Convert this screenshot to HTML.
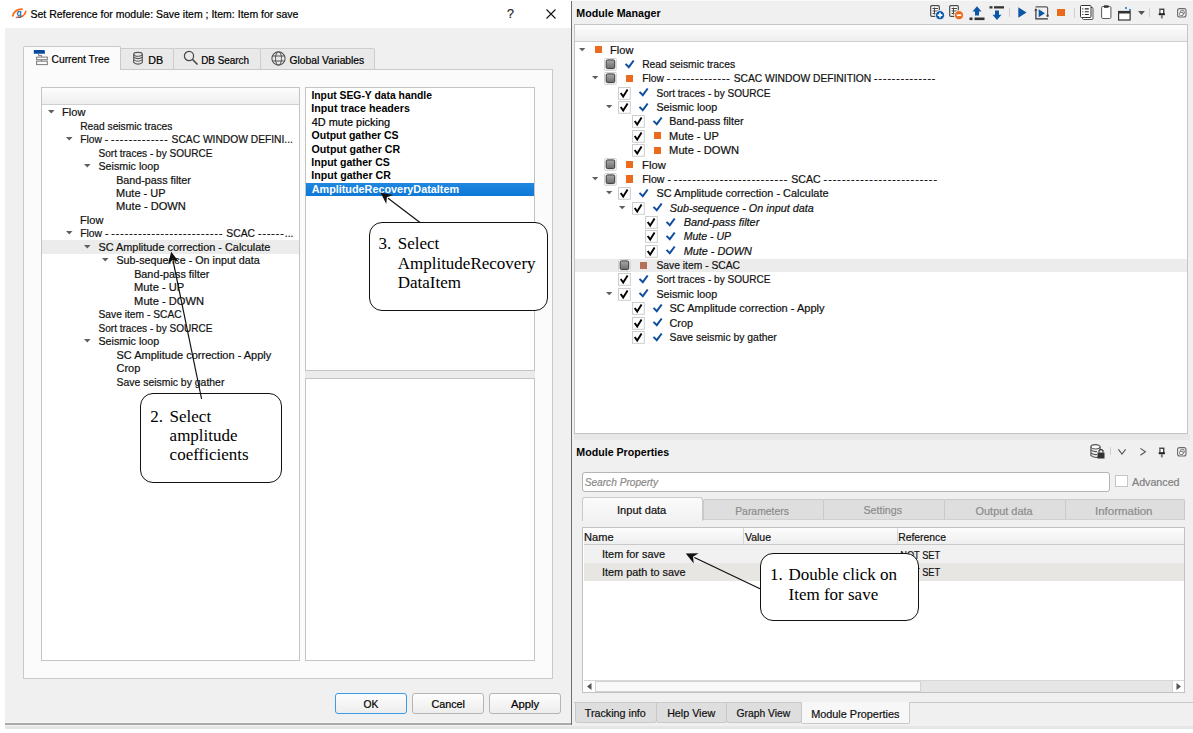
<!DOCTYPE html><html><head><meta charset="utf-8"><style>html,body{margin:0;padding:0;}body{width:1193px;height:733px;position:relative;overflow:hidden;background:#f0f0f0;font-family:"Liberation Sans",sans-serif;}</style></head><body>
<div style="position:absolute;left:571px;top:0px;width:622px;height:733px;background:#f0f0f0"></div>
<div style="position:absolute;left:571px;top:0px;width:622px;height:1px;background:#fafafa"></div>
<div style="position:absolute;left:0px;top:0px;width:571px;height:28px;background:#ffffff"></div>
<div style="position:absolute;left:0px;top:28px;width:5px;height:705px;background:#ffffff"></div>
<div style="position:absolute;left:5px;top:28px;width:566px;height:694px;background:#f0f0f0"></div>
<div style="position:absolute;left:5px;top:722px;width:567px;height:1px;background:#f7f7f7"></div>
<div style="position:absolute;left:5px;top:723px;width:567px;height:2px;background:#a9a9a9"></div>
<div style="position:absolute;left:5px;top:725px;width:567px;height:1px;background:#f4f4f4"></div>
<div style="position:absolute;left:5px;top:726px;width:1188px;height:3px;background:#e6e6e6"></div>
<div style="position:absolute;left:0px;top:729px;width:1193px;height:4px;background:#ffffff"></div>
<div style="position:absolute;left:571px;top:1px;width:1px;height:724px;background:#6e6e6e"></div>
<svg style="position:absolute;left:8px;top:4px;overflow:visible;" width="24" height="20" viewBox="0 0 24 20"><path d="M4.8 11.9 Q6.2 5.6 14 5.2" stroke="#ff6a13" stroke-width="1.7" fill="none" stroke-linecap="round"/><path d="M17.8 7.3 Q16.6 13.3 8.6 13.5" stroke="#ff6a13" stroke-width="1.7" fill="none" stroke-linecap="round"/><text x="11.2" y="11.6" font-family="Liberation Sans" font-size="8.5" font-weight="bold" fill="#1a6cb5" text-anchor="middle">g</text></svg>
<div style="position:absolute;left:31.00px;top:6.36px;line-height:16px;font-family:'Liberation Sans', sans-serif;font-size:10.5px;font-weight:normal;color:#000;white-space:nowrap;-webkit-text-stroke-width:0.2px;;transform:translateX(-0.53px) scaleX(1.0003);transform-origin:0 0">Set Reference for module: Save item ; Item: Item for save</div>
<div style="position:absolute;left:507.00px;top:5.67px;line-height:16px;font-family:'Liberation Sans', sans-serif;font-size:12.5px;font-weight:normal;color:#222;white-space:nowrap;-webkit-text-stroke-width:0.2px;">?</div>
<svg style="position:absolute;left:545.5px;top:8.5px;overflow:visible;" width="10" height="10" viewBox="0 0 10 10"><path d="M0.5 0.5 L9.5 9.5 M9.5 0.5 L0.5 9.5" stroke="#111" stroke-width="1.1"/></svg>
<div style="position:absolute;left:23px;top:69px;width:530px;height:610px;background:#fbfbfb;border:1px solid #c9c9c9;box-sizing:border-box"></div>
<div style="position:absolute;left:120px;top:48px;width:54px;height:21px;background:#e9e9e9;border:1px solid #cdcdcd;border-bottom:none;border-radius:2px 2px 0 0;box-sizing:border-box"></div>
<div style="position:absolute;left:173px;top:48px;width:88px;height:21px;background:#e9e9e9;border:1px solid #cdcdcd;border-bottom:none;border-radius:2px 2px 0 0;box-sizing:border-box"></div>
<div style="position:absolute;left:260px;top:48px;width:115px;height:21px;background:#e9e9e9;border:1px solid #cdcdcd;border-bottom:none;border-radius:2px 2px 0 0;box-sizing:border-box"></div>
<div style="position:absolute;left:23px;top:46px;width:98px;height:24px;background:#fbfbfb;border:1px solid #c9c9c9;border-bottom:none;border-radius:2px 2px 0 0;box-sizing:border-box"></div>
<div style="position:absolute;left:52.00px;top:51.36px;line-height:16px;font-family:'Liberation Sans', sans-serif;font-size:10.5px;font-weight:normal;color:#000;white-space:nowrap;-webkit-text-stroke-width:0.2px;;transform:translateX(-0.52px) scaleX(0.9834);transform-origin:0 0">Current Tree</div>
<div style="position:absolute;left:149.00px;top:51.86px;line-height:16px;font-family:'Liberation Sans', sans-serif;font-size:10.5px;font-weight:normal;color:#000;white-space:nowrap;-webkit-text-stroke-width:0.2px;;transform:translateX(-0.86px) scaleX(1.0204);transform-origin:0 0">DB</div>
<div style="position:absolute;left:202.40px;top:51.86px;line-height:16px;font-family:'Liberation Sans', sans-serif;font-size:10.5px;font-weight:normal;color:#000;white-space:nowrap;-webkit-text-stroke-width:0.2px;;transform:translateX(-0.79px) scaleX(0.9422);transform-origin:0 0">DB Search</div>
<div style="position:absolute;left:289.60px;top:51.86px;line-height:16px;font-family:'Liberation Sans', sans-serif;font-size:10.5px;font-weight:normal;color:#000;white-space:nowrap;-webkit-text-stroke-width:0.2px;;transform:translateX(-0.51px) scaleX(0.9802);transform-origin:0 0">Global Variables</div>
<svg style="position:absolute;left:33px;top:49px;overflow:visible;" width="16" height="17" viewBox="0 0 16 17"><path d="M0.8 1 H10.6 Q11.9 1 11.9 2.3 V4.8 H0.8 Z" fill="#0a4a9e"/><path d="M5.5 4.8 V6.4 H8.6 V8.1 M8.6 10.6 V12.2" stroke="#7a7a7a" stroke-width="1" fill="none"/><rect x="3.6" y="8.1" width="10.7" height="2.6" fill="none" stroke="#7a7a7a" stroke-width="1"/><rect x="3.6" y="12.2" width="10.7" height="3.4" fill="none" stroke="#7a7a7a" stroke-width="1"/></svg>
<svg style="position:absolute;left:133px;top:52px;overflow:visible;" width="12" height="14" viewBox="0 0 12 14"><ellipse cx="5" cy="2.3" rx="4.3" ry="1.9" fill="none" stroke="#555" stroke-width="1.1"/><path d="M0.7 2.3 V10.6 Q5 13.6 9.3 10.6 V2.3" fill="none" stroke="#555" stroke-width="1.1"/><path d="M0.7 5.2 Q5 8 9.3 5.2 M0.7 7.9 Q5 10.7 9.3 7.9" fill="none" stroke="#555" stroke-width="1.1"/></svg>
<svg style="position:absolute;left:183px;top:50px;overflow:visible;" width="16" height="16" viewBox="0 0 16 16"><circle cx="6" cy="6" r="4.6" fill="none" stroke="#444" stroke-width="1.2"/><path d="M9.3 9.3 L14.5 14.5" stroke="#444" stroke-width="1.6"/></svg>
<svg style="position:absolute;left:270.5px;top:50.5px;overflow:visible;" width="15" height="15" viewBox="0 0 15 15"><circle cx="7.5" cy="7.5" r="6.6" fill="none" stroke="#555" stroke-width="1.1"/><ellipse cx="7.5" cy="7.5" rx="3" ry="6.6" fill="none" stroke="#555" stroke-width="1"/><path d="M1 5 H14 M1 10 H14" stroke="#555" stroke-width="1"/></svg>
<div style="position:absolute;left:41px;top:87px;width:259px;height:574px;background:#fff;border:1px solid #c4c4c4;box-sizing:border-box"></div>
<div style="position:absolute;left:42px;top:88px;width:257px;height:16px;background:linear-gradient(#fdfdfd,#eeeeee)"></div>
<div style="position:absolute;left:42px;top:104px;width:257px;height:1px;background:#cfcfcf"></div>
<div style="position:absolute;left:42px;top:240px;width:257px;height:13.5px;background:#ececec"></div>
<svg style="position:absolute;left:47.60000000000001px;top:110.0px;overflow:visible;" width="6.6" height="3.4" viewBox="0 0 6.6 3.4"><path d="M0 0 L6.6 0 L3.3 3.4 Z" fill="#5f5f5f"/></svg>
<div style="position:absolute;left:62.60px;top:104.16px;line-height:16px;font-family:'Liberation Sans', sans-serif;font-size:10.5px;font-weight:normal;color:#111;white-space:nowrap;-webkit-text-stroke-width:0.2px;;transform:translateX(-0.88px) scaleX(1.0504);transform-origin:0 0">Flow</div>
<div style="position:absolute;left:80.60px;top:117.63px;line-height:16px;font-family:'Liberation Sans', sans-serif;font-size:10.5px;font-weight:normal;color:#111;white-space:nowrap;-webkit-text-stroke-width:0.2px;;transform:translateX(-0.82px) scaleX(0.9759);transform-origin:0 0">Read seismic traces</div>
<svg style="position:absolute;left:65.6px;top:136.94px;overflow:visible;" width="6.6" height="3.4" viewBox="0 0 6.6 3.4"><path d="M0 0 L6.6 0 L3.3 3.4 Z" fill="#5f5f5f"/></svg>
<div style="position:absolute;left:80.60px;top:131.10px;line-height:16px;font-family:'Liberation Sans', sans-serif;font-size:10.5px;font-weight:normal;color:#111;white-space:nowrap;-webkit-text-stroke-width:0.2px;;transform:translateX(-0.82px) scaleX(0.9769);transform-origin:0 0">Flow - <span style="letter-spacing:0.1em">-------------</span> SCAC WINDOW DEFINI...</div>
<div style="position:absolute;left:98.60px;top:144.57px;line-height:16px;font-family:'Liberation Sans', sans-serif;font-size:10.5px;font-weight:normal;color:#111;white-space:nowrap;-webkit-text-stroke-width:0.2px;;transform:translateX(-0.50px) scaleX(0.9575);transform-origin:0 0">Sort traces - by SOURCE</div>
<svg style="position:absolute;left:83.6px;top:163.88px;overflow:visible;" width="6.6" height="3.4" viewBox="0 0 6.6 3.4"><path d="M0 0 L6.6 0 L3.3 3.4 Z" fill="#5f5f5f"/></svg>
<div style="position:absolute;left:98.60px;top:158.04px;line-height:16px;font-family:'Liberation Sans', sans-serif;font-size:10.5px;font-weight:normal;color:#111;white-space:nowrap;-webkit-text-stroke-width:0.2px;;transform:translateX(-0.53px) scaleX(1.0189);transform-origin:0 0">Seismic loop</div>
<div style="position:absolute;left:116.60px;top:171.51px;line-height:16px;font-family:'Liberation Sans', sans-serif;font-size:10.5px;font-weight:normal;color:#111;white-space:nowrap;-webkit-text-stroke-width:0.2px;;transform:translateX(-0.86px) scaleX(1.0247);transform-origin:0 0">Band-pass filter</div>
<div style="position:absolute;left:116.60px;top:184.98px;line-height:16px;font-family:'Liberation Sans', sans-serif;font-size:10.5px;font-weight:normal;color:#111;white-space:nowrap;-webkit-text-stroke-width:0.2px;;transform:translateX(-0.88px) scaleX(1.0439);transform-origin:0 0">Mute - UP</div>
<div style="position:absolute;left:116.60px;top:198.45px;line-height:16px;font-family:'Liberation Sans', sans-serif;font-size:10.5px;font-weight:normal;color:#111;white-space:nowrap;-webkit-text-stroke-width:0.2px;;transform:translateX(-0.89px) scaleX(1.0582);transform-origin:0 0">Mute - DOWN</div>
<div style="position:absolute;left:80.60px;top:211.92px;line-height:16px;font-family:'Liberation Sans', sans-serif;font-size:10.5px;font-weight:normal;color:#111;white-space:nowrap;-webkit-text-stroke-width:0.2px;;transform:translateX(-0.88px) scaleX(1.0504);transform-origin:0 0">Flow</div>
<svg style="position:absolute;left:65.6px;top:231.23px;overflow:visible;" width="6.6" height="3.4" viewBox="0 0 6.6 3.4"><path d="M0 0 L6.6 0 L3.3 3.4 Z" fill="#5f5f5f"/></svg>
<div style="position:absolute;left:80.60px;top:225.39px;line-height:16px;font-family:'Liberation Sans', sans-serif;font-size:10.5px;font-weight:normal;color:#111;white-space:nowrap;-webkit-text-stroke-width:0.2px;;transform:translateX(-0.83px) scaleX(0.9864);transform-origin:0 0">Flow - <span style="letter-spacing:0.1em">-------------------------</span> SCAC <span style="letter-spacing:0.1em">------</span>...</div>
<svg style="position:absolute;left:83.6px;top:244.7px;overflow:visible;" width="6.6" height="3.4" viewBox="0 0 6.6 3.4"><path d="M0 0 L6.6 0 L3.3 3.4 Z" fill="#5f5f5f"/></svg>
<div style="position:absolute;left:98.60px;top:238.86px;line-height:16px;font-family:'Liberation Sans', sans-serif;font-size:10.5px;font-weight:normal;color:#111;white-space:nowrap;-webkit-text-stroke-width:0.2px;;transform:translateX(-0.54px) scaleX(1.0374);transform-origin:0 0">SC Amplitude correction - Calculate</div>
<svg style="position:absolute;left:101.6px;top:258.17px;overflow:visible;" width="6.6" height="3.4" viewBox="0 0 6.6 3.4"><path d="M0 0 L6.6 0 L3.3 3.4 Z" fill="#5f5f5f"/></svg>
<div style="position:absolute;left:116.60px;top:252.33px;line-height:16px;font-family:'Liberation Sans', sans-serif;font-size:10.5px;font-weight:normal;color:#111;white-space:nowrap;-webkit-text-stroke-width:0.2px;;transform:translateX(-0.54px) scaleX(1.0226);transform-origin:0 0">Sub-sequence - On input data</div>
<div style="position:absolute;left:134.60px;top:265.80px;line-height:16px;font-family:'Liberation Sans', sans-serif;font-size:10.5px;font-weight:normal;color:#111;white-space:nowrap;-webkit-text-stroke-width:0.2px;;transform:translateX(-0.87px) scaleX(1.0302);transform-origin:0 0">Band-pass filter</div>
<div style="position:absolute;left:134.60px;top:279.27px;line-height:16px;font-family:'Liberation Sans', sans-serif;font-size:10.5px;font-weight:normal;color:#111;white-space:nowrap;-webkit-text-stroke-width:0.2px;;transform:translateX(-0.89px) scaleX(1.0592);transform-origin:0 0">Mute - UP</div>
<div style="position:absolute;left:134.60px;top:292.74px;line-height:16px;font-family:'Liberation Sans', sans-serif;font-size:10.5px;font-weight:normal;color:#111;white-space:nowrap;-webkit-text-stroke-width:0.2px;;transform:translateX(-0.89px) scaleX(1.0613);transform-origin:0 0">Mute - DOWN</div>
<div style="position:absolute;left:98.60px;top:306.21px;line-height:16px;font-family:'Liberation Sans', sans-serif;font-size:10.5px;font-weight:normal;color:#111;white-space:nowrap;-webkit-text-stroke-width:0.2px;;transform:translateX(-0.51px) scaleX(0.9761);transform-origin:0 0">Save item - SCAC</div>
<div style="position:absolute;left:98.60px;top:319.68px;line-height:16px;font-family:'Liberation Sans', sans-serif;font-size:10.5px;font-weight:normal;color:#111;white-space:nowrap;-webkit-text-stroke-width:0.2px;;transform:translateX(-0.50px) scaleX(0.9575);transform-origin:0 0">Sort traces - by SOURCE</div>
<svg style="position:absolute;left:83.6px;top:338.99px;overflow:visible;" width="6.6" height="3.4" viewBox="0 0 6.6 3.4"><path d="M0 0 L6.6 0 L3.3 3.4 Z" fill="#5f5f5f"/></svg>
<div style="position:absolute;left:98.60px;top:333.15px;line-height:16px;font-family:'Liberation Sans', sans-serif;font-size:10.5px;font-weight:normal;color:#111;white-space:nowrap;-webkit-text-stroke-width:0.2px;;transform:translateX(-0.53px) scaleX(1.0189);transform-origin:0 0">Seismic loop</div>
<div style="position:absolute;left:116.60px;top:346.62px;line-height:16px;font-family:'Liberation Sans', sans-serif;font-size:10.5px;font-weight:normal;color:#111;white-space:nowrap;-webkit-text-stroke-width:0.2px;;transform:translateX(-0.55px) scaleX(1.0489);transform-origin:0 0">SC Amplitude correction - Apply</div>
<div style="position:absolute;left:116.60px;top:360.09px;line-height:16px;font-family:'Liberation Sans', sans-serif;font-size:10.5px;font-weight:normal;color:#111;white-space:nowrap;-webkit-text-stroke-width:0.2px;;transform:translateX(-0.55px) scaleX(1.0485);transform-origin:0 0">Crop</div>
<div style="position:absolute;left:116.60px;top:373.56px;line-height:16px;font-family:'Liberation Sans', sans-serif;font-size:10.5px;font-weight:normal;color:#111;white-space:nowrap;-webkit-text-stroke-width:0.2px;;transform:translateX(-0.52px) scaleX(0.9941);transform-origin:0 0">Save seismic by gather</div>
<div style="position:absolute;left:305px;top:87px;width:230px;height:284px;background:#fff;border:1px solid #c4c4c4;box-sizing:border-box"></div>
<div style="position:absolute;left:305px;top:371px;width:230px;height:7px;background:#ebebeb"></div>
<div style="position:absolute;left:305px;top:378px;width:230px;height:283px;background:#fff;border:1px solid #c4c4c4;box-sizing:border-box"></div>
<div style="position:absolute;left:306px;top:182.5px;width:228px;height:13.5px;background:linear-gradient(#1f87df,#0d78d7)"></div>
<div style="position:absolute;left:312.00px;top:86.76px;line-height:16px;font-family:'Liberation Sans', sans-serif;font-size:10.5px;font-weight:bold;color:#000;white-space:nowrap;;transform:translateX(-0.62px) scaleX(0.9853);transform-origin:0 0">Input SEG-Y data handle</div>
<div style="position:absolute;left:312.00px;top:100.21px;line-height:16px;font-family:'Liberation Sans', sans-serif;font-size:10.5px;font-weight:bold;color:#000;white-space:nowrap;;transform:translateX(-0.64px) scaleX(1.0171);transform-origin:0 0">Input trace headers</div>
<div style="position:absolute;left:312.00px;top:113.66px;line-height:16px;font-family:'Liberation Sans', sans-serif;font-size:10.5px;font-weight:normal;color:#000;white-space:nowrap;-webkit-text-stroke-width:0.2px;;transform:translateX(-0.22px) scaleX(1.0397);transform-origin:0 0">4D mute picking</div>
<div style="position:absolute;left:312.00px;top:127.11px;line-height:16px;font-family:'Liberation Sans', sans-serif;font-size:10.5px;font-weight:bold;color:#000;white-space:nowrap;;transform:translateX(-0.42px) scaleX(1.0012);transform-origin:0 0">Output gather CS</div>
<div style="position:absolute;left:312.00px;top:140.56px;line-height:16px;font-family:'Liberation Sans', sans-serif;font-size:10.5px;font-weight:bold;color:#000;white-space:nowrap;;transform:translateX(-0.43px) scaleX(1.0134);transform-origin:0 0">Output gather CR</div>
<div style="position:absolute;left:312.00px;top:154.01px;line-height:16px;font-family:'Liberation Sans', sans-serif;font-size:10.5px;font-weight:bold;color:#000;white-space:nowrap;;transform:translateX(-0.63px) scaleX(1.0029);transform-origin:0 0">Input gather CS</div>
<div style="position:absolute;left:312.00px;top:167.46px;line-height:16px;font-family:'Liberation Sans', sans-serif;font-size:10.5px;font-weight:bold;color:#000;white-space:nowrap;;transform:translateX(-0.64px) scaleX(1.0089);transform-origin:0 0">Input gather CR</div>
<div style="position:absolute;left:312.00px;top:180.91px;line-height:16px;font-family:'Liberation Sans', sans-serif;font-size:10.5px;font-weight:bold;color:#fff;white-space:nowrap;;transform:translateX(-0.32px) scaleX(1.0312);transform-origin:0 0">AmplitudeRecoveryDataItem</div>
<div style="position:absolute;left:335px;top:693px;width:72px;height:21px;background:linear-gradient(#fdfdfd,#ededed);border:1px solid #3d9be6;border-radius:3px;box-sizing:border-box"></div>
<div style="position:absolute;left:363.70px;top:696.26px;line-height:16px;font-family:'Liberation Sans', sans-serif;font-size:10.5px;font-weight:normal;color:#000;white-space:nowrap;-webkit-text-stroke-width:0.2px;;transform:translateX(-0.41px) scaleX(0.9798);transform-origin:0 0">OK</div>
<div style="position:absolute;left:412px;top:693px;width:72px;height:21px;background:linear-gradient(#fdfdfd,#ededed);border:1px solid #b5b5b5;border-radius:3px;box-sizing:border-box"></div>
<div style="position:absolute;left:432.10px;top:696.26px;line-height:16px;font-family:'Liberation Sans', sans-serif;font-size:10.5px;font-weight:normal;color:#000;white-space:nowrap;-webkit-text-stroke-width:0.2px;;transform:translateX(-0.54px) scaleX(1.0222);transform-origin:0 0">Cancel</div>
<div style="position:absolute;left:489px;top:693px;width:72px;height:21px;background:linear-gradient(#fdfdfd,#ededed);border:1px solid #b5b5b5;border-radius:3px;box-sizing:border-box"></div>
<div style="position:absolute;left:510.80px;top:696.26px;line-height:16px;font-family:'Liberation Sans', sans-serif;font-size:10.5px;font-weight:normal;color:#000;white-space:nowrap;-webkit-text-stroke-width:0.2px;;transform:translateX(0.00px) scaleX(1.0743);transform-origin:0 0">Apply</div>
<div style="position:absolute;left:577.00px;top:4.83px;line-height:16px;font-family:'Liberation Sans', sans-serif;font-size:10.6px;font-weight:bold;color:#000;white-space:nowrap;;transform:translateX(-0.64px) scaleX(1.0073);transform-origin:0 0">Module Manager</div>
<svg style="position:absolute;left:929.5px;top:5px;overflow:visible;" width="15" height="15" viewBox="0 0 15 15"><rect x="0.7" y="0.7" width="8.6" height="10.6" rx="1" fill="#fff" stroke="#4a4a4a" stroke-width="1.2"/><path d="M2.5 3.5 H8 M2.5 6 H8 M2.5 8.5 H6 M4.5 2.5 V9.5" stroke="#4a4a4a" stroke-width="1"/><circle cx="10" cy="10.2" r="4.6" fill="#0b5aa8" stroke="#fff" stroke-width="0.8"/><path d="M7.6 10.2 H12.4 M10 7.8 V12.6" stroke="#fff" stroke-width="1.7"/></svg>
<svg style="position:absolute;left:949px;top:5px;overflow:visible;" width="15" height="15" viewBox="0 0 15 15"><rect x="0.7" y="0.7" width="8.6" height="10.6" rx="1" fill="#fff" stroke="#4a4a4a" stroke-width="1.2"/><path d="M2.5 3.5 H8 M2.5 6 H8 M2.5 8.5 H6 M4.5 2.5 V9.5" stroke="#4a4a4a" stroke-width="1"/><circle cx="10" cy="10.2" r="4.6" fill="#ea6a1c" stroke="#fff" stroke-width="0.8"/><path d="M7.7 10.2 H12.3" stroke="#fff" stroke-width="1.8"/></svg>
<svg style="position:absolute;left:968.5px;top:5.5px;overflow:visible;" width="16" height="15" viewBox="0 0 16 15"><path d="M3.5 5.5 L8 0.3 L12.5 5.5 H10 V9.5 H6 V5.5 Z" fill="#0b56a6"/><rect x="0.5" y="11.5" width="3" height="2.6" fill="#333"/><rect x="5.5" y="11.5" width="10" height="2.6" fill="#333"/></svg>
<svg style="position:absolute;left:988.5px;top:5.5px;overflow:visible;" width="16" height="15" viewBox="0 0 16 15"><rect x="0.5" y="0.2" width="3" height="2.3" fill="#333"/><rect x="5" y="0.2" width="10" height="2.3" fill="#333"/><path d="M6 4.5 H10 V8.7 H12.5 L8 14 L3.5 8.7 H6 Z" fill="#0b56a6"/></svg>
<div style="position:absolute;left:1009px;top:8px;width:1px;height:9px;background:#d0d0d0"></div>
<svg style="position:absolute;left:1017.5px;top:7px;overflow:visible;" width="9" height="11" viewBox="0 0 9 11"><path d="M0.3 0.3 L8.5 5.5 L0.3 10.7 Z" fill="#0b56a6"/></svg>
<svg style="position:absolute;left:1033.5px;top:5.5px;overflow:visible;" width="16" height="14" viewBox="0 0 16 14"><path d="M1.5 0.9 H12.3 Q13.6 0.9 13.6 2.2 V9.6" fill="none" stroke="#5a5a5a" stroke-width="1.2"/><circle cx="13.6" cy="9.7" r="1.2" fill="#444"/><path d="M1.9 12.9 V3.8 M1.3 12.9 H14" fill="none" stroke="#333" stroke-width="1.2"/><path d="M0.2 4.6 L1.9 2.3 L3.6 4.6 Z" fill="#333"/><path d="M4.7 3.2 L10.9 7.3 L4.7 11.3 Z" fill="#0b56a6"/></svg>
<div style="position:absolute;left:1057px;top:9.3px;width:7.5px;height:7.0px;background:#ea6a1c"></div>
<div style="position:absolute;left:1074px;top:8px;width:1px;height:9.5px;background:#d0d0d0"></div>
<svg style="position:absolute;left:1080px;top:5px;overflow:visible;" width="14" height="15" viewBox="0 0 14 15"><rect x="2.5" y="2.5" width="10.5" height="12" rx="1" fill="#fff" stroke="#555" stroke-width="1"/><rect x="0.5" y="0.5" width="10.5" height="12" rx="1" fill="#fff" stroke="#333" stroke-width="1"/><path d="M2.3 3.9 H3.3 M4.8 3.9 H8.8 M2.3 6.7 H3.3 M4.8 6.7 H8.8 M2.3 9.5 H3.3 M4.8 9.5 H8.8" stroke="#222" stroke-width="1.1"/></svg>
<svg style="position:absolute;left:1100.5px;top:5px;overflow:visible;" width="11" height="14" viewBox="0 0 11 14"><rect x="0.6" y="1.5" width="9.3" height="12" rx="1.2" fill="#fff" stroke="#555" stroke-width="1"/><rect x="3" y="0.3" width="4.5" height="2.5" fill="#333"/></svg>
<svg style="position:absolute;left:1118px;top:5.5px;overflow:visible;" width="16" height="15" viewBox="0 0 16 15"><rect x="0.6" y="5.5" width="11.5" height="8.5" fill="#fff" stroke="#333" stroke-width="1.2"/><rect x="0.6" y="5.5" width="11.5" height="2" fill="#333"/><path d="M7 1 L9 3 M9 1 L7 3 M11 3 L13 5 M13 3 L11 5" stroke="#3a7fd0" stroke-width="0.9"/></svg>
<svg style="position:absolute;left:1137.5px;top:10.8px;overflow:visible;" width="7" height="4" viewBox="0 0 7 4"><path d="M0 0 L7 0 L3.5 4 Z" fill="#555"/></svg>
<div style="position:absolute;left:1149px;top:8px;width:1px;height:9px;background:#d0d0d0"></div>
<svg style="position:absolute;left:1158px;top:7.5px;overflow:visible;" width="8" height="11" viewBox="0 0 8 11"><rect x="1.75" y="1.25" width="4" height="5" fill="#fff" stroke="#333" stroke-width="1.3"/><path d="M1.75 1.25 V6.2" stroke="#888" stroke-width="1.3"/><rect x="0.7" y="5.3" width="6.2" height="1.9" fill="#222"/><rect x="2.9" y="7.2" width="1.9" height="3.2" fill="#777"/></svg>
<svg style="position:absolute;left:1177px;top:8.1px;overflow:visible;" width="11" height="10" viewBox="0 0 11 10"><rect x="0.6" y="0.6" width="8.4" height="8.4" rx="2" fill="none" stroke="#6a6a6a" stroke-width="1.1"/><rect x="3.4" y="2.6" width="3.8" height="3.5" rx="1" fill="none" stroke="#6a6a6a" stroke-width="0.9"/><rect x="2.6" y="4.4" width="3.4" height="3.2" rx="1" fill="#fff" stroke="#6a6a6a" stroke-width="0.9"/></svg>
<div style="position:absolute;left:574px;top:24px;width:614px;height:410px;background:#fff;border:1px solid #c4c4c4;box-sizing:border-box"></div>
<div style="position:absolute;left:575px;top:25px;width:612px;height:16px;background:linear-gradient(#fdfdfd,#eeeeee)"></div>
<div style="position:absolute;left:575px;top:41px;width:612px;height:1px;background:#cfcfcf"></div>
<div style="position:absolute;left:575px;top:258.8px;width:612px;height:13.699999999999989px;background:#ececec"></div>
<svg style="position:absolute;left:578.5px;top:47.7px;overflow:visible;" width="6.4" height="3.3" viewBox="0 0 6.4 3.3"><path d="M0 0 L6.4 0 L3.2 3.3 Z" fill="#5f5f5f"/></svg>
<div style="position:absolute;left:595.2px;top:46.1px;width:7.2999999999999545px;height:7.199999999999996px;background:#eb6a1e"></div>
<div style="position:absolute;left:611.00px;top:41.56px;line-height:16px;font-family:'Liberation Sans', sans-serif;font-size:10.5px;font-weight:normal;color:#111;white-space:nowrap;-webkit-text-stroke-width:0.2px;;transform:translateX(-0.88px) scaleX(1.0504);transform-origin:0 0">Flow</div>
<svg style="position:absolute;left:604.3px;top:57.870000000000005px;overflow:visible;" width="13" height="13" viewBox="0 0 13 13"><rect x="0.5" y="0.5" width="11.8" height="11.8" rx="1" fill="#fafafa" stroke="#d2d2d2" stroke-width="1"/><defs><linearGradient id="gg" x1="0" y1="0" x2="0" y2="1"><stop offset="0" stop-color="#a9a9a9"/><stop offset="1" stop-color="#6c6c6c"/></linearGradient></defs><rect x="2.2" y="1.9" width="8.5" height="8.7" rx="1.3" fill="url(#gg)" stroke="#3a3a3a" stroke-width="1"/></svg>
<svg style="position:absolute;left:625.2px;top:59.57000000000001px;overflow:visible;" width="10" height="9" viewBox="0 0 10 9"><path d="M0.5 3.9 L3.8 7.2 L8.7 0.5" fill="none" stroke="#0f4f9e" stroke-width="2.0"/></svg>
<div style="position:absolute;left:642.80px;top:55.93px;line-height:16px;font-family:'Liberation Sans', sans-serif;font-size:10.5px;font-weight:normal;color:#111;white-space:nowrap;-webkit-text-stroke-width:0.2px;;transform:translateX(-0.83px) scaleX(0.9824);transform-origin:0 0">Read seismic traces</div>
<svg style="position:absolute;left:592.1px;top:76.44px;overflow:visible;" width="6.4" height="3.3" viewBox="0 0 6.4 3.3"><path d="M0 0 L6.4 0 L3.2 3.3 Z" fill="#5f5f5f"/></svg>
<svg style="position:absolute;left:604.3px;top:72.24px;overflow:visible;" width="13" height="13" viewBox="0 0 13 13"><rect x="0.5" y="0.5" width="11.8" height="11.8" rx="1" fill="#fafafa" stroke="#d2d2d2" stroke-width="1"/><defs><linearGradient id="gg" x1="0" y1="0" x2="0" y2="1"><stop offset="0" stop-color="#a9a9a9"/><stop offset="1" stop-color="#6c6c6c"/></linearGradient></defs><rect x="2.2" y="1.9" width="8.5" height="8.7" rx="1.3" fill="url(#gg)" stroke="#3a3a3a" stroke-width="1"/></svg>
<div style="position:absolute;left:626.2px;top:74.8px;width:7.2999999999999545px;height:7.200000000000003px;background:#eb6a1e"></div>
<div style="position:absolute;left:642.80px;top:70.30px;line-height:16px;font-family:'Liberation Sans', sans-serif;font-size:10.5px;font-weight:normal;color:#111;white-space:nowrap;-webkit-text-stroke-width:0.2px;;transform:translateX(-0.82px) scaleX(0.9782);transform-origin:0 0">Flow - <span style="letter-spacing:0.1em">-------------</span> SCAC WINDOW DEFINITION <span style="letter-spacing:0.1em">--------------</span></div>
<svg style="position:absolute;left:618.0px;top:86.61px;overflow:visible;" width="13" height="13" viewBox="0 0 13 13"><rect x="0.5" y="0.5" width="11.8" height="11.8" fill="#fff" stroke="#cdcdcd" stroke-width="1"/><path d="M2.7 6.0 L5.2 9.6 L9.6 2.6" fill="none" stroke="#000" stroke-width="1.9"/></svg>
<svg style="position:absolute;left:638.9000000000001px;top:88.31px;overflow:visible;" width="10" height="9" viewBox="0 0 10 9"><path d="M0.5 3.9 L3.8 7.2 L8.7 0.5" fill="none" stroke="#0f4f9e" stroke-width="2.0"/></svg>
<div style="position:absolute;left:656.50px;top:84.67px;line-height:16px;font-family:'Liberation Sans', sans-serif;font-size:10.5px;font-weight:normal;color:#111;white-space:nowrap;-webkit-text-stroke-width:0.2px;;transform:translateX(-0.50px) scaleX(0.9575);transform-origin:0 0">Sort traces - by SOURCE</div>
<svg style="position:absolute;left:605.7px;top:105.18px;overflow:visible;" width="6.4" height="3.3" viewBox="0 0 6.4 3.3"><path d="M0 0 L6.4 0 L3.2 3.3 Z" fill="#5f5f5f"/></svg>
<svg style="position:absolute;left:618.0px;top:100.98px;overflow:visible;" width="13" height="13" viewBox="0 0 13 13"><rect x="0.5" y="0.5" width="11.8" height="11.8" fill="#fff" stroke="#cdcdcd" stroke-width="1"/><path d="M2.7 6.0 L5.2 9.6 L9.6 2.6" fill="none" stroke="#000" stroke-width="1.9"/></svg>
<svg style="position:absolute;left:638.9000000000001px;top:102.68px;overflow:visible;" width="10" height="9" viewBox="0 0 10 9"><path d="M0.5 3.9 L3.8 7.2 L8.7 0.5" fill="none" stroke="#0f4f9e" stroke-width="2.0"/></svg>
<div style="position:absolute;left:656.50px;top:99.04px;line-height:16px;font-family:'Liberation Sans', sans-serif;font-size:10.5px;font-weight:normal;color:#111;white-space:nowrap;-webkit-text-stroke-width:0.2px;;transform:translateX(-0.54px) scaleX(1.0207);transform-origin:0 0">Seismic loop</div>
<svg style="position:absolute;left:631.6999999999999px;top:115.35px;overflow:visible;" width="13" height="13" viewBox="0 0 13 13"><rect x="0.5" y="0.5" width="11.8" height="11.8" fill="#fff" stroke="#cdcdcd" stroke-width="1"/><path d="M2.7 6.0 L5.2 9.6 L9.6 2.6" fill="none" stroke="#000" stroke-width="1.9"/></svg>
<svg style="position:absolute;left:652.6px;top:117.05px;overflow:visible;" width="10" height="9" viewBox="0 0 10 9"><path d="M0.5 3.9 L3.8 7.2 L8.7 0.5" fill="none" stroke="#0f4f9e" stroke-width="2.0"/></svg>
<div style="position:absolute;left:670.20px;top:113.41px;line-height:16px;font-family:'Liberation Sans', sans-serif;font-size:10.5px;font-weight:normal;color:#111;white-space:nowrap;-webkit-text-stroke-width:0.2px;;transform:translateX(-0.86px) scaleX(1.0191);transform-origin:0 0">Band-pass filter</div>
<svg style="position:absolute;left:631.6999999999999px;top:129.72000000000003px;overflow:visible;" width="13" height="13" viewBox="0 0 13 13"><rect x="0.5" y="0.5" width="11.8" height="11.8" fill="#fff" stroke="#cdcdcd" stroke-width="1"/><path d="M2.7 6.0 L5.2 9.6 L9.6 2.6" fill="none" stroke="#000" stroke-width="1.9"/></svg>
<div style="position:absolute;left:653.6px;top:132.3px;width:7.2999999999999545px;height:7.199999999999989px;background:#eb6a1e"></div>
<div style="position:absolute;left:670.20px;top:127.78px;line-height:16px;font-family:'Liberation Sans', sans-serif;font-size:10.5px;font-weight:normal;color:#111;white-space:nowrap;-webkit-text-stroke-width:0.2px;;transform:translateX(-0.88px) scaleX(1.0505);transform-origin:0 0">Mute - UP</div>
<svg style="position:absolute;left:631.6999999999999px;top:144.09px;overflow:visible;" width="13" height="13" viewBox="0 0 13 13"><rect x="0.5" y="0.5" width="11.8" height="11.8" fill="#fff" stroke="#cdcdcd" stroke-width="1"/><path d="M2.7 6.0 L5.2 9.6 L9.6 2.6" fill="none" stroke="#000" stroke-width="1.9"/></svg>
<div style="position:absolute;left:653.6px;top:146.7px;width:7.2999999999999545px;height:7.200000000000017px;background:#eb6a1e"></div>
<div style="position:absolute;left:670.20px;top:142.15px;line-height:16px;font-family:'Liberation Sans', sans-serif;font-size:10.5px;font-weight:normal;color:#111;white-space:nowrap;-webkit-text-stroke-width:0.2px;;transform:translateX(-0.89px) scaleX(1.0598);transform-origin:0 0">Mute - DOWN</div>
<svg style="position:absolute;left:604.3px;top:158.46px;overflow:visible;" width="13" height="13" viewBox="0 0 13 13"><rect x="0.5" y="0.5" width="11.8" height="11.8" rx="1" fill="#fafafa" stroke="#d2d2d2" stroke-width="1"/><defs><linearGradient id="gg" x1="0" y1="0" x2="0" y2="1"><stop offset="0" stop-color="#a9a9a9"/><stop offset="1" stop-color="#6c6c6c"/></linearGradient></defs><rect x="2.2" y="1.9" width="8.5" height="8.7" rx="1.3" fill="url(#gg)" stroke="#3a3a3a" stroke-width="1"/></svg>
<div style="position:absolute;left:626.2px;top:161.1px;width:7.2999999999999545px;height:7.200000000000017px;background:#eb6a1e"></div>
<div style="position:absolute;left:642.80px;top:156.52px;line-height:16px;font-family:'Liberation Sans', sans-serif;font-size:10.5px;font-weight:normal;color:#111;white-space:nowrap;-webkit-text-stroke-width:0.2px;;transform:translateX(-0.89px) scaleX(1.0644);transform-origin:0 0">Flow</div>
<svg style="position:absolute;left:592.1px;top:177.02999999999997px;overflow:visible;" width="6.4" height="3.3" viewBox="0 0 6.4 3.3"><path d="M0 0 L6.4 0 L3.2 3.3 Z" fill="#5f5f5f"/></svg>
<svg style="position:absolute;left:604.3px;top:172.82999999999998px;overflow:visible;" width="13" height="13" viewBox="0 0 13 13"><rect x="0.5" y="0.5" width="11.8" height="11.8" rx="1" fill="#fafafa" stroke="#d2d2d2" stroke-width="1"/><defs><linearGradient id="gg" x1="0" y1="0" x2="0" y2="1"><stop offset="0" stop-color="#a9a9a9"/><stop offset="1" stop-color="#6c6c6c"/></linearGradient></defs><rect x="2.2" y="1.9" width="8.5" height="8.7" rx="1.3" fill="url(#gg)" stroke="#3a3a3a" stroke-width="1"/></svg>
<div style="position:absolute;left:626.2px;top:175.4px;width:7.2999999999999545px;height:7.199999999999989px;background:#eb6a1e"></div>
<div style="position:absolute;left:642.80px;top:170.89px;line-height:16px;font-family:'Liberation Sans', sans-serif;font-size:10.5px;font-weight:normal;color:#111;white-space:nowrap;-webkit-text-stroke-width:0.2px;;transform:translateX(-0.85px) scaleX(1.0069);transform-origin:0 0">Flow - <span style="letter-spacing:0.1em">-------------------------</span> SCAC <span style="letter-spacing:0.1em">-------------------------</span></div>
<svg style="position:absolute;left:605.7px;top:191.39999999999998px;overflow:visible;" width="6.4" height="3.3" viewBox="0 0 6.4 3.3"><path d="M0 0 L6.4 0 L3.2 3.3 Z" fill="#5f5f5f"/></svg>
<svg style="position:absolute;left:618.0px;top:187.2px;overflow:visible;" width="13" height="13" viewBox="0 0 13 13"><rect x="0.5" y="0.5" width="11.8" height="11.8" fill="#fff" stroke="#cdcdcd" stroke-width="1"/><path d="M2.7 6.0 L5.2 9.6 L9.6 2.6" fill="none" stroke="#000" stroke-width="1.9"/></svg>
<svg style="position:absolute;left:638.9000000000001px;top:188.89999999999998px;overflow:visible;" width="10" height="9" viewBox="0 0 10 9"><path d="M0.5 3.9 L3.8 7.2 L8.7 0.5" fill="none" stroke="#0f4f9e" stroke-width="2.0"/></svg>
<div style="position:absolute;left:656.50px;top:185.26px;line-height:16px;font-family:'Liberation Sans', sans-serif;font-size:10.5px;font-weight:normal;color:#111;white-space:nowrap;-webkit-text-stroke-width:0.2px;;transform:translateX(-0.54px) scaleX(1.0380);transform-origin:0 0">SC Amplitude correction - Calculate</div>
<svg style="position:absolute;left:619.3px;top:205.76999999999998px;overflow:visible;" width="6.4" height="3.3" viewBox="0 0 6.4 3.3"><path d="M0 0 L6.4 0 L3.2 3.3 Z" fill="#5f5f5f"/></svg>
<svg style="position:absolute;left:631.6999999999999px;top:201.57px;overflow:visible;" width="13" height="13" viewBox="0 0 13 13"><rect x="0.5" y="0.5" width="11.8" height="11.8" fill="#fff" stroke="#cdcdcd" stroke-width="1"/><path d="M2.7 6.0 L5.2 9.6 L9.6 2.6" fill="none" stroke="#000" stroke-width="1.9"/></svg>
<svg style="position:absolute;left:652.6px;top:203.26999999999998px;overflow:visible;" width="10" height="9" viewBox="0 0 10 9"><path d="M0.5 3.9 L3.8 7.2 L8.7 0.5" fill="none" stroke="#0f4f9e" stroke-width="2.0"/></svg>
<div style="position:absolute;left:670.20px;top:199.63px;line-height:16px;font-family:'Liberation Sans', sans-serif;font-size:10.5px;font-weight:normal;font-style:italic;color:#111;white-space:nowrap;-webkit-text-stroke-width:0.2px;;transform:translateX(-0.32px) scaleX(1.0277);transform-origin:0 0">Sub-sequence - On input data</div>
<svg style="position:absolute;left:645.4px;top:215.94px;overflow:visible;" width="13" height="13" viewBox="0 0 13 13"><rect x="0.5" y="0.5" width="11.8" height="11.8" fill="#fff" stroke="#cdcdcd" stroke-width="1"/><path d="M2.7 6.0 L5.2 9.6 L9.6 2.6" fill="none" stroke="#000" stroke-width="1.9"/></svg>
<svg style="position:absolute;left:666.3000000000001px;top:217.64px;overflow:visible;" width="10" height="9" viewBox="0 0 10 9"><path d="M0.5 3.9 L3.8 7.2 L8.7 0.5" fill="none" stroke="#0f4f9e" stroke-width="2.0"/></svg>
<div style="position:absolute;left:683.90px;top:214.00px;line-height:16px;font-family:'Liberation Sans', sans-serif;font-size:10.5px;font-weight:normal;font-style:italic;color:#111;white-space:nowrap;-webkit-text-stroke-width:0.2px;;transform:translateX(-0.33px) scaleX(1.0360);transform-origin:0 0">Band-pass filter</div>
<svg style="position:absolute;left:645.4px;top:230.31px;overflow:visible;" width="13" height="13" viewBox="0 0 13 13"><rect x="0.5" y="0.5" width="11.8" height="11.8" fill="#fff" stroke="#cdcdcd" stroke-width="1"/><path d="M2.7 6.0 L5.2 9.6 L9.6 2.6" fill="none" stroke="#000" stroke-width="1.9"/></svg>
<svg style="position:absolute;left:666.3000000000001px;top:232.01px;overflow:visible;" width="10" height="9" viewBox="0 0 10 9"><path d="M0.5 3.9 L3.8 7.2 L8.7 0.5" fill="none" stroke="#0f4f9e" stroke-width="2.0"/></svg>
<div style="position:absolute;left:683.90px;top:228.37px;line-height:16px;font-family:'Liberation Sans', sans-serif;font-size:10.5px;font-weight:normal;font-style:italic;color:#111;white-space:nowrap;-webkit-text-stroke-width:0.2px;;transform:translateX(-0.32px) scaleX(1.0014);transform-origin:0 0">Mute - UP</div>
<svg style="position:absolute;left:645.4px;top:244.68px;overflow:visible;" width="13" height="13" viewBox="0 0 13 13"><rect x="0.5" y="0.5" width="11.8" height="11.8" fill="#fff" stroke="#cdcdcd" stroke-width="1"/><path d="M2.7 6.0 L5.2 9.6 L9.6 2.6" fill="none" stroke="#000" stroke-width="1.9"/></svg>
<svg style="position:absolute;left:666.3000000000001px;top:246.38px;overflow:visible;" width="10" height="9" viewBox="0 0 10 9"><path d="M0.5 3.9 L3.8 7.2 L8.7 0.5" fill="none" stroke="#0f4f9e" stroke-width="2.0"/></svg>
<div style="position:absolute;left:683.90px;top:242.74px;line-height:16px;font-family:'Liberation Sans', sans-serif;font-size:10.5px;font-weight:normal;font-style:italic;color:#111;white-space:nowrap;-webkit-text-stroke-width:0.2px;;transform:translateX(-0.33px) scaleX(1.0347);transform-origin:0 0">Mute - DOWN</div>
<svg style="position:absolute;left:618.0px;top:259.05px;overflow:visible;" width="13" height="13" viewBox="0 0 13 13"><rect x="0.5" y="0.5" width="11.8" height="11.8" rx="1" fill="#fafafa" stroke="#d2d2d2" stroke-width="1"/><defs><linearGradient id="gg" x1="0" y1="0" x2="0" y2="1"><stop offset="0" stop-color="#a9a9a9"/><stop offset="1" stop-color="#6c6c6c"/></linearGradient></defs><rect x="2.2" y="1.9" width="8.5" height="8.7" rx="1.3" fill="url(#gg)" stroke="#3a3a3a" stroke-width="1"/></svg>
<div style="position:absolute;left:639.9px;top:261.6px;width:7.300000000000068px;height:7.2999999999999545px;background:#b5705a"></div>
<div style="position:absolute;left:656.50px;top:257.11px;line-height:16px;font-family:'Liberation Sans', sans-serif;font-size:10.5px;font-weight:normal;color:#111;white-space:nowrap;-webkit-text-stroke-width:0.2px;;transform:translateX(-0.51px) scaleX(0.9809);transform-origin:0 0">Save item - SCAC</div>
<svg style="position:absolute;left:618.0px;top:273.42px;overflow:visible;" width="13" height="13" viewBox="0 0 13 13"><rect x="0.5" y="0.5" width="11.8" height="11.8" fill="#fff" stroke="#cdcdcd" stroke-width="1"/><path d="M2.7 6.0 L5.2 9.6 L9.6 2.6" fill="none" stroke="#000" stroke-width="1.9"/></svg>
<svg style="position:absolute;left:638.9000000000001px;top:275.12px;overflow:visible;" width="10" height="9" viewBox="0 0 10 9"><path d="M0.5 3.9 L3.8 7.2 L8.7 0.5" fill="none" stroke="#0f4f9e" stroke-width="2.0"/></svg>
<div style="position:absolute;left:656.50px;top:271.48px;line-height:16px;font-family:'Liberation Sans', sans-serif;font-size:10.5px;font-weight:normal;color:#111;white-space:nowrap;-webkit-text-stroke-width:0.2px;;transform:translateX(-0.50px) scaleX(0.9575);transform-origin:0 0">Sort traces - by SOURCE</div>
<svg style="position:absolute;left:605.7px;top:291.99px;overflow:visible;" width="6.4" height="3.3" viewBox="0 0 6.4 3.3"><path d="M0 0 L6.4 0 L3.2 3.3 Z" fill="#5f5f5f"/></svg>
<svg style="position:absolute;left:618.0px;top:287.79px;overflow:visible;" width="13" height="13" viewBox="0 0 13 13"><rect x="0.5" y="0.5" width="11.8" height="11.8" fill="#fff" stroke="#cdcdcd" stroke-width="1"/><path d="M2.7 6.0 L5.2 9.6 L9.6 2.6" fill="none" stroke="#000" stroke-width="1.9"/></svg>
<svg style="position:absolute;left:638.9000000000001px;top:289.49px;overflow:visible;" width="10" height="9" viewBox="0 0 10 9"><path d="M0.5 3.9 L3.8 7.2 L8.7 0.5" fill="none" stroke="#0f4f9e" stroke-width="2.0"/></svg>
<div style="position:absolute;left:656.50px;top:285.85px;line-height:16px;font-family:'Liberation Sans', sans-serif;font-size:10.5px;font-weight:normal;color:#111;white-space:nowrap;-webkit-text-stroke-width:0.2px;;transform:translateX(-0.53px) scaleX(1.0189);transform-origin:0 0">Seismic loop</div>
<svg style="position:absolute;left:631.6999999999999px;top:302.15999999999997px;overflow:visible;" width="13" height="13" viewBox="0 0 13 13"><rect x="0.5" y="0.5" width="11.8" height="11.8" fill="#fff" stroke="#cdcdcd" stroke-width="1"/><path d="M2.7 6.0 L5.2 9.6 L9.6 2.6" fill="none" stroke="#000" stroke-width="1.9"/></svg>
<svg style="position:absolute;left:652.6px;top:303.85999999999996px;overflow:visible;" width="10" height="9" viewBox="0 0 10 9"><path d="M0.5 3.9 L3.8 7.2 L8.7 0.5" fill="none" stroke="#0f4f9e" stroke-width="2.0"/></svg>
<div style="position:absolute;left:670.20px;top:300.22px;line-height:16px;font-family:'Liberation Sans', sans-serif;font-size:10.5px;font-weight:normal;color:#111;white-space:nowrap;-webkit-text-stroke-width:0.2px;;transform:translateX(-0.55px) scaleX(1.0503);transform-origin:0 0">SC Amplitude correction - Apply</div>
<svg style="position:absolute;left:631.6999999999999px;top:316.53px;overflow:visible;" width="13" height="13" viewBox="0 0 13 13"><rect x="0.5" y="0.5" width="11.8" height="11.8" fill="#fff" stroke="#cdcdcd" stroke-width="1"/><path d="M2.7 6.0 L5.2 9.6 L9.6 2.6" fill="none" stroke="#000" stroke-width="1.9"/></svg>
<svg style="position:absolute;left:652.6px;top:318.22999999999996px;overflow:visible;" width="10" height="9" viewBox="0 0 10 9"><path d="M0.5 3.9 L3.8 7.2 L8.7 0.5" fill="none" stroke="#0f4f9e" stroke-width="2.0"/></svg>
<div style="position:absolute;left:670.20px;top:314.59px;line-height:16px;font-family:'Liberation Sans', sans-serif;font-size:10.5px;font-weight:normal;color:#111;white-space:nowrap;-webkit-text-stroke-width:0.2px;;transform:translateX(-0.54px) scaleX(1.0348);transform-origin:0 0">Crop</div>
<svg style="position:absolute;left:631.6999999999999px;top:330.9px;overflow:visible;" width="13" height="13" viewBox="0 0 13 13"><rect x="0.5" y="0.5" width="11.8" height="11.8" fill="#fff" stroke="#cdcdcd" stroke-width="1"/><path d="M2.7 6.0 L5.2 9.6 L9.6 2.6" fill="none" stroke="#000" stroke-width="1.9"/></svg>
<svg style="position:absolute;left:652.6px;top:332.59999999999997px;overflow:visible;" width="10" height="9" viewBox="0 0 10 9"><path d="M0.5 3.9 L3.8 7.2 L8.7 0.5" fill="none" stroke="#0f4f9e" stroke-width="2.0"/></svg>
<div style="position:absolute;left:670.20px;top:328.96px;line-height:16px;font-family:'Liberation Sans', sans-serif;font-size:10.5px;font-weight:normal;color:#111;white-space:nowrap;-webkit-text-stroke-width:0.2px;;transform:translateX(-0.52px) scaleX(0.9885);transform-origin:0 0">Save seismic by gather</div>
<div style="position:absolute;left:574px;top:434px;width:616px;height:5.5px;background:#e8e8e8"></div>
<div style="position:absolute;left:577.00px;top:444.13px;line-height:16px;font-family:'Liberation Sans', sans-serif;font-size:10.6px;font-weight:bold;color:#000;white-space:nowrap;;transform:translateX(-0.64px) scaleX(1.0035);transform-origin:0 0">Module Properties</div>
<svg style="position:absolute;left:1089.5px;top:443.5px;overflow:visible;" width="16" height="16" viewBox="0 0 16 16"><ellipse cx="5.5" cy="2.8" rx="4.6" ry="2.2" fill="#fff" stroke="#555" stroke-width="1.1"/><path d="M0.9 2.8 V11.5 Q5.5 14.5 8 13 M10.1 2.8 V6" fill="none" stroke="#555" stroke-width="1.1"/><path d="M0.9 6 Q4 8 7 7.5 M0.9 9 Q4 11 7 10.5" fill="none" stroke="#555" stroke-width="1.1"/><rect x="7.5" y="8.5" width="7" height="6" fill="#333"/><path d="M9 8.5 V6.5 Q11 4.8 13 6.5 V8.5" fill="none" stroke="#333" stroke-width="1.1"/></svg>
<div style="position:absolute;left:1109.5px;top:447.3px;width:1.0px;height:8.199999999999989px;background:#d0d0d0"></div>
<svg style="position:absolute;left:1118px;top:449px;overflow:visible;" width="8" height="6" viewBox="0 0 8 6"><path d="M0.4 0.4 L4 5.2 L7.6 0.4" fill="none" stroke="#555" stroke-width="1.1"/></svg>
<svg style="position:absolute;left:1139.5px;top:447.8px;overflow:visible;" width="6" height="8" viewBox="0 0 6 8"><path d="M0.4 0.4 L5.4 3.8 L0.4 7.2" fill="none" stroke="#555" stroke-width="1.1"/></svg>
<svg style="position:absolute;left:1158px;top:446.8px;overflow:visible;" width="8" height="11" viewBox="0 0 8 11"><rect x="1.75" y="1.25" width="4" height="5" fill="#fff" stroke="#333" stroke-width="1.3"/><path d="M1.75 1.25 V6.2" stroke="#888" stroke-width="1.3"/><rect x="0.7" y="5.3" width="6.2" height="1.9" fill="#222"/><rect x="2.9" y="7.2" width="1.9" height="3.2" fill="#777"/></svg>
<svg style="position:absolute;left:1177px;top:447px;overflow:visible;" width="11" height="10" viewBox="0 0 11 10"><rect x="0.6" y="0.6" width="8.4" height="8.4" rx="2" fill="none" stroke="#6a6a6a" stroke-width="1.1"/><rect x="3.4" y="2.6" width="3.8" height="3.5" rx="1" fill="none" stroke="#6a6a6a" stroke-width="0.9"/><rect x="2.6" y="4.4" width="3.4" height="3.2" rx="1" fill="#fff" stroke="#6a6a6a" stroke-width="0.9"/></svg>
<div style="position:absolute;left:582px;top:471.5px;width:528px;height:20.5px;background:#fff;border:1px solid #b4b4b4;border-radius:3px;box-sizing:border-box"></div>
<div style="position:absolute;left:584.70px;top:473.86px;line-height:16px;font-family:'Liberation Sans', sans-serif;font-size:10.5px;font-weight:normal;font-style:italic;color:#8a8a8a;white-space:nowrap;-webkit-text-stroke-width:0.2px;;transform:translateX(-0.30px) scaleX(0.9655);transform-origin:0 0">Search Property</div>
<div style="position:absolute;left:1115px;top:474.8px;width:13px;height:12.699999999999989px;background:#fff;border:1px solid #c6c6c6;box-sizing:border-box"></div>
<div style="position:absolute;left:1132.10px;top:473.66px;line-height:16px;font-family:'Liberation Sans', sans-serif;font-size:10.5px;font-weight:normal;color:#808080;white-space:nowrap;-webkit-text-stroke-width:0.2px;;transform:translateX(0.00px) scaleX(1.0175);transform-origin:0 0">Advanced</div>
<div style="position:absolute;left:702.5px;top:499.4px;width:121.29999999999995px;height:20.600000000000023px;background:#dedede;border:1px solid #cacaca;border-bottom:1px solid #d0d0d0;border-radius:2px 2px 0 0;box-sizing:border-box"></div>
<div style="position:absolute;left:736.10px;top:502.66px;line-height:16px;font-family:'Liberation Sans', sans-serif;font-size:10.5px;font-weight:normal;color:#8c8c8c;white-space:nowrap;-webkit-text-stroke-width:0.2px;;transform:translateX(-0.83px) scaleX(0.9901);transform-origin:0 0">Parameters</div>
<div style="position:absolute;left:823.3px;top:499.4px;width:121.5px;height:20.600000000000023px;background:#dedede;border:1px solid #cacaca;border-bottom:1px solid #d0d0d0;border-radius:2px 2px 0 0;box-sizing:border-box"></div>
<div style="position:absolute;left:864.10px;top:502.26px;line-height:16px;font-family:'Liberation Sans', sans-serif;font-size:10.5px;font-weight:normal;color:#8c8c8c;white-space:nowrap;-webkit-text-stroke-width:0.2px;;transform:translateX(-0.53px) scaleX(1.0144);transform-origin:0 0">Settings</div>
<div style="position:absolute;left:944.2px;top:499.4px;width:121.79999999999995px;height:20.600000000000023px;background:#dedede;border:1px solid #cacaca;border-bottom:1px solid #d0d0d0;border-radius:2px 2px 0 0;box-sizing:border-box"></div>
<div style="position:absolute;left:976.00px;top:502.66px;line-height:16px;font-family:'Liberation Sans', sans-serif;font-size:10.5px;font-weight:normal;color:#8c8c8c;white-space:nowrap;-webkit-text-stroke-width:0.2px;;transform:translateX(-0.44px) scaleX(1.0386);transform-origin:0 0">Output data</div>
<div style="position:absolute;left:1065.2px;top:499.4px;width:119.79999999999995px;height:20.600000000000023px;background:#dedede;border:1px solid #cacaca;border-bottom:1px solid #d0d0d0;border-radius:2px 2px 0 0;box-sizing:border-box"></div>
<div style="position:absolute;left:1096.20px;top:502.66px;line-height:16px;font-family:'Liberation Sans', sans-serif;font-size:10.5px;font-weight:normal;color:#8c8c8c;white-space:nowrap;-webkit-text-stroke-width:0.2px;;transform:translateX(-1.04px) scaleX(1.0957);transform-origin:0 0">Information</div>
<div style="position:absolute;left:582px;top:497px;width:121px;height:24px;background:linear-gradient(#fbfbfb,#f2f2f2);border:1px solid #c9c9c9;border-bottom:none;border-radius:3px 3px 0 0;box-sizing:border-box"></div>
<div style="position:absolute;left:617.90px;top:501.56px;line-height:16px;font-family:'Liberation Sans', sans-serif;font-size:10.5px;font-weight:normal;color:#111;white-space:nowrap;-webkit-text-stroke-width:0.2px;;transform:translateX(-1.00px) scaleX(1.0550);transform-origin:0 0">Input data</div>
<div style="position:absolute;left:582px;top:527px;width:603px;height:166px;background:#fff;border:1px solid #c2c2c2;box-sizing:border-box"></div>
<div style="position:absolute;left:583.5px;top:528px;width:600.5px;height:16px;background:linear-gradient(#fdfdfd,#eeeeee)"></div>
<div style="position:absolute;left:583.5px;top:544px;width:600.5px;height:1px;background:#c9c9c9"></div>
<div style="position:absolute;left:743px;top:528px;width:1px;height:16px;background:#d6d6d6"></div>
<div style="position:absolute;left:896.5px;top:528px;width:1.0px;height:16px;background:#d6d6d6"></div>
<div style="position:absolute;left:585.10px;top:528.66px;line-height:16px;font-family:'Liberation Sans', sans-serif;font-size:10.5px;font-weight:normal;color:#111;white-space:nowrap;-webkit-text-stroke-width:0.2px;;transform:translateX(-0.88px) scaleX(1.0532);transform-origin:0 0">Name</div>
<div style="position:absolute;left:745.30px;top:528.66px;line-height:16px;font-family:'Liberation Sans', sans-serif;font-size:10.5px;font-weight:normal;color:#111;white-space:nowrap;-webkit-text-stroke-width:0.2px;;transform:translateX(0.00px) scaleX(0.9953);transform-origin:0 0">Value</div>
<div style="position:absolute;left:899.30px;top:528.86px;line-height:16px;font-family:'Liberation Sans', sans-serif;font-size:10.5px;font-weight:normal;color:#111;white-space:nowrap;-webkit-text-stroke-width:0.2px;;transform:translateX(-0.83px) scaleX(0.9863);transform-origin:0 0">Reference</div>
<div style="position:absolute;left:583.5px;top:545px;width:600.5px;height:18px;background:#f1f1f1"></div>
<div style="position:absolute;left:583.5px;top:563px;width:600.5px;height:17.5px;background:#e8e6e3"></div>
<div style="position:absolute;left:603.20px;top:546.46px;line-height:16px;font-family:'Liberation Sans', sans-serif;font-size:10.5px;font-weight:normal;color:#111;white-space:nowrap;-webkit-text-stroke-width:0.2px;;transform:translateX(-0.98px) scaleX(1.0383);transform-origin:0 0">Item for save</div>
<div style="position:absolute;left:603.20px;top:564.06px;line-height:16px;font-family:'Liberation Sans', sans-serif;font-size:10.5px;font-weight:normal;color:#111;white-space:nowrap;-webkit-text-stroke-width:0.2px;;transform:translateX(-0.98px) scaleX(1.0357);transform-origin:0 0">Item path to save</div>
<div style="position:absolute;left:900.50px;top:546.56px;line-height:16px;font-family:'Liberation Sans', sans-serif;font-size:10.5px;font-weight:normal;color:#111;white-space:nowrap;-webkit-text-stroke-width:0.2px;;transform:translateX(-0.74px) scaleX(0.8802);transform-origin:0 0">NOT SET</div>
<div style="position:absolute;left:900.50px;top:564.16px;line-height:16px;font-family:'Liberation Sans', sans-serif;font-size:10.5px;font-weight:normal;color:#111;white-space:nowrap;-webkit-text-stroke-width:0.2px;;transform:translateX(-0.74px) scaleX(0.8802);transform-origin:0 0">NOT SET</div>
<div style="position:absolute;left:583.5px;top:680px;width:600.5px;height:12px;background:#e6e6e6;border-top:1px solid #d8d8d8;box-sizing:border-box"></div>
<div style="position:absolute;left:595px;top:680.5px;width:325.5px;height:11.5px;background:#f9f9f9;border:1px solid #d3d3d3;box-sizing:border-box"></div>
<div style="position:absolute;left:583.5px;top:680.5px;width:11.5px;height:11.5px;background:#fff"></div>
<div style="position:absolute;left:1172px;top:680.5px;width:12px;height:11.5px;background:#fff;border-left:1px solid #d3d3d3;box-sizing:border-box"></div>
<svg style="position:absolute;left:586.5px;top:682.5px;overflow:visible;" width="5" height="7" viewBox="0 0 5 7"><path d="M4.5 0 L4.5 7 L0 3.5 Z" fill="#555"/></svg>
<svg style="position:absolute;left:1175.5px;top:682.5px;overflow:visible;" width="5" height="7" viewBox="0 0 5 7"><path d="M0.5 0 L0.5 7 L5 3.5 Z" fill="#555"/></svg>
<div style="position:absolute;left:574px;top:702px;width:619px;height:1px;background:#c9c9c9"></div>
<div style="position:absolute;left:574.5px;top:702.5px;width:82.5px;height:20.0px;background:#dedede;border:1px solid #c9c9c9;border-top:none;border-radius:0 0 3px 3px;box-sizing:border-box"></div>
<div style="position:absolute;left:585.40px;top:704.76px;line-height:16px;font-family:'Liberation Sans', sans-serif;font-size:10.5px;font-weight:normal;color:#111;white-space:nowrap;-webkit-text-stroke-width:0.2px;;transform:translateX(-0.21px) scaleX(1.0217);transform-origin:0 0">Tracking info</div>
<div style="position:absolute;left:656px;top:702.5px;width:70.5px;height:20.0px;background:#dedede;border:1px solid #c9c9c9;border-top:none;border-radius:0 0 3px 3px;box-sizing:border-box"></div>
<div style="position:absolute;left:667.60px;top:704.76px;line-height:16px;font-family:'Liberation Sans', sans-serif;font-size:10.5px;font-weight:normal;color:#111;white-space:nowrap;-webkit-text-stroke-width:0.2px;;transform:translateX(-0.86px) scaleX(1.0193);transform-origin:0 0">Help View</div>
<div style="position:absolute;left:725.5px;top:702.5px;width:76.5px;height:20.0px;background:#dedede;border:1px solid #c9c9c9;border-top:none;border-radius:0 0 3px 3px;box-sizing:border-box"></div>
<div style="position:absolute;left:736.70px;top:704.96px;line-height:16px;font-family:'Liberation Sans', sans-serif;font-size:10.5px;font-weight:normal;color:#111;white-space:nowrap;-webkit-text-stroke-width:0.2px;;transform:translateX(-0.52px) scaleX(0.9838);transform-origin:0 0">Graph View</div>
<div style="position:absolute;left:801px;top:702px;width:108.5px;height:21.5px;background:#f7f7f7;border:1px solid #c9c9c9;border-top:none;border-radius:0 0 2px 2px;box-sizing:border-box"></div>
<div style="position:absolute;left:812.20px;top:705.76px;line-height:16px;font-family:'Liberation Sans', sans-serif;font-size:10.5px;font-weight:normal;color:#111;white-space:nowrap;-webkit-text-stroke-width:0.2px;;transform:translateX(-0.87px) scaleX(1.0369);transform-origin:0 0">Module Properties</div>
<div style="position:absolute;left:140px;top:393px;width:142px;height:90px;background:#fff;border:1.3px solid #111;border-radius:13px;box-sizing:border-box"></div>
<div style="position:absolute;left:150.30px;top:406.56px;line-height:20px;font-family:'Liberation Serif', serif;font-size:17px;font-weight:normal;color:#000;white-space:nowrap;">2.</div>
<div style="position:absolute;left:169.60px;top:406.56px;line-height:20px;font-family:'Liberation Serif', serif;font-size:17px;font-weight:normal;color:#000;white-space:nowrap;">Select</div>
<div style="position:absolute;left:169.60px;top:426.06px;line-height:20px;font-family:'Liberation Serif', serif;font-size:17px;font-weight:normal;color:#000;white-space:nowrap;">amplitude</div>
<div style="position:absolute;left:169.60px;top:445.26px;line-height:20px;font-family:'Liberation Serif', serif;font-size:17px;font-weight:normal;color:#000;white-space:nowrap;">coefficients</div>
<div style="position:absolute;left:368.5px;top:222px;width:179.5px;height:89px;background:#fff;border:1.3px solid #111;border-radius:13px;box-sizing:border-box"></div>
<div style="position:absolute;left:378.50px;top:234.06px;line-height:20px;font-family:'Liberation Serif', serif;font-size:17px;font-weight:normal;color:#000;white-space:nowrap;">3.</div>
<div style="position:absolute;left:397.70px;top:234.06px;line-height:20px;font-family:'Liberation Serif', serif;font-size:17px;font-weight:normal;color:#000;white-space:nowrap;">Select</div>
<div style="position:absolute;left:397.70px;top:253.86px;line-height:20px;font-family:'Liberation Serif', serif;font-size:17px;font-weight:normal;color:#000;white-space:nowrap;">AmplitudeRecovery</div>
<div style="position:absolute;left:397.70px;top:272.86px;line-height:20px;font-family:'Liberation Serif', serif;font-size:17px;font-weight:normal;color:#000;white-space:nowrap;">DataItem</div>
<div style="position:absolute;left:760px;top:553px;width:159px;height:68px;background:#fff;border:1.3px solid #111;border-radius:13px;box-sizing:border-box"></div>
<div style="position:absolute;left:770.00px;top:564.66px;line-height:20px;font-family:'Liberation Serif', serif;font-size:17px;font-weight:normal;color:#000;white-space:nowrap;">1.</div>
<div style="position:absolute;left:788.50px;top:564.66px;line-height:20px;font-family:'Liberation Serif', serif;font-size:17px;font-weight:normal;color:#000;white-space:nowrap;">Double click on</div>
<div style="position:absolute;left:788.50px;top:584.66px;line-height:20px;font-family:'Liberation Serif', serif;font-size:17px;font-weight:normal;color:#000;white-space:nowrap;">Item for save</div>
<svg style="position:absolute;left:0;top:0" width="1193" height="733" viewBox="0 0 1193 733"><line x1="201.6" y1="399" x2="173.12" y2="261.10" stroke="#111" stroke-width="1.2"/><path d="M171.2 251.8 L179.01 261.93 L172.82 259.63 L168.04 264.19 Z" fill="#111"/><line x1="420" y1="222.5" x2="388.07" y2="198.25" stroke="#111" stroke-width="1.2"/><path d="M380.5 192.5 L393.05 195.00 L386.87 197.34 L386.27 203.92 Z" fill="#111"/><line x1="760" y1="588.7" x2="694.38" y2="557.48" stroke="#111" stroke-width="1.2"/><path d="M685.8 553.4 L698.59 553.28 L693.02 556.84 L693.78 563.40 Z" fill="#111"/></svg>
</body></html>
